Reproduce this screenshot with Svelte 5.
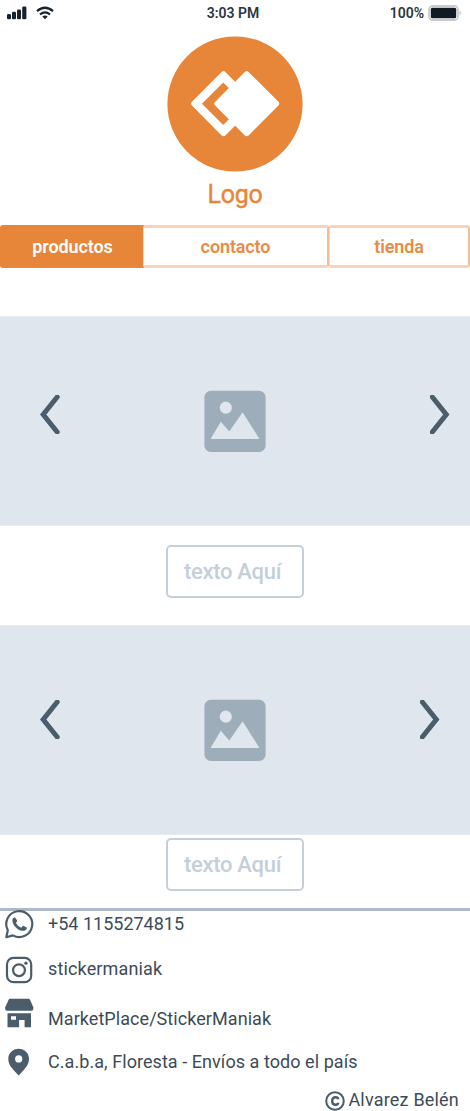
<script>
  const slides = ['first', 'second'];
</script>

<main>
  <header class="status">
    <div class="signals">
      <svg width="20" height="14" viewBox="0 0 20 14"><g fill="#17222c"><rect x="0" y="8" width="4" height="5.3" rx="1.3"/><rect x="5" y="5.8" width="4" height="7.5" rx="1.3"/><rect x="10" y="3.5" width="4" height="9.8" rx="1.3"/><rect x="15.2" y="0.5" width="4.2" height="12.8" rx="1.3"/></g></svg>
      <svg width="18" height="14" viewBox="0 0 18 14"><g fill="none" stroke="#17222c" stroke-width="2.2"><path d="M1 5.2Q9-1.7 17 5.2"/><path d="M4 8.5Q9 4.2 14 8.5"/></g><path d="M6.3 10.5Q9 8.5 11.7 10.5L9 13.3Z" fill="#17222c"/></svg>
    </div>
    <span class="time">3:03 PM</span>
    <div class="power">
      <span>100%</span>
      <svg width="34" height="16" viewBox="0 0 34 16"><rect x="1" y="1" width="29" height="14" rx="3.5" fill="#fff" stroke="#c9cccf" stroke-width="1.8"/><rect x="2.8" y="2.8" width="25.4" height="10.4" rx="1.5" fill="#101b24"/><path d="M31.5 5.5Q35 8 31.5 10.5Z" fill="#c9cccf"/></svg>
    </div>
  </header>

  <section class="brand">
    <svg width="136" height="136" viewBox="0 0 136 136">
      <circle cx="68" cy="68" r="67.6" fill="#e78539"/>
      <path d="M56.5 38.3 27.3 67.7 56.5 97.1 85.9 67.7Z" fill="#fff" stroke="#fff" stroke-width="6" stroke-linejoin="round"/>
      <path d="M59.2 49.4 40.9 67.7 59.2 86" fill="none" stroke="#e78539" stroke-width="8.4"/>
      <path d="M79.7 38.3 50.7 67.7 79.7 97.1 109.1 67.7Z" fill="#fff" stroke="#fff" stroke-width="6" stroke-linejoin="round"/>
    </svg>
    <h1>Logo</h1>
  </section>

  <nav>
    <a class="active" href="#productos"><span>productos</span></a>
    <a href="#contacto"><span>contacto</span></a>
    <a href="#tienda"><span>tienda</span></a>
  </nav>

  {#each slides as slide (slide)}
    <section class="slide {slide}">
      <div class="panel">
        <svg class="arrow prev" width="20" height="39" viewBox="0 0 20 39"><path d="M17.2 2 3.2 19.5 17.2 37"/></svg>
        <svg class="photo" width="62" height="62" viewBox="0 0 62 62"><rect x="0.4" y="0.8" width="61.2" height="61.2" rx="6.5" fill="#9eadba"/><g fill="#dfe6ee"><circle cx="21.8" cy="17.7" r="6.1"/><path d="M7 48.3 16.8 31.8 25.3 41.6 38.6 22.3 55 48.3V49.1H7Z"/></g></svg>
        <svg class="arrow next" width="20" height="39" viewBox="0 0 20 39"><path d="M2.3 2 16.3 19.5 2.3 37"/></svg>
      </div>
      <div class="caption"><span>texto Aquí</span></div>
    </section>
  {/each}

  <footer>
    <div class="row phone">
      <svg width="30" height="30" viewBox="0 0 30 30"><path d="M1.3 28.2 2.8 21.2A13 13 0 1 1 7.9 26.4Z" fill="none" stroke="#4b5d6b" stroke-width="2.2" stroke-linejoin="round"/><path d="M9.8 8.2C8.3 8.4 7.1 10 7.4 12.2 8 16.2 12.6 21.3 17.3 21.8 19.9 22 21.9 20.7 22 18.7L18.4 16.8C17.6 16.5 17 18.3 16.2 18.7 13.8 17.8 11.9 16 10.9 13.8 11.7 12.8 12.5 12.2 12.2 11.4Z" fill="#4b5d6b"/></svg>
      <span>+54 1155274815</span>
    </div>
    <div class="row social">
      <svg width="30" height="30" viewBox="0 0 30 30"><g fill="none" stroke="#4b5d6b" stroke-width="2.2"><rect x="2" y="2.8" width="24.2" height="24.4" rx="6.5"/><circle cx="14" cy="15.2" r="5.9"/></g><circle cx="20.9" cy="8.2" r="1.6" fill="#4b5d6b"/></svg>
      <span>stickermaniak</span>
    </div>
    <div class="row market">
      <svg width="30" height="30" viewBox="0 0 30 30"><g fill="#4b5d6b"><path d="M4.3.8H24.3L25.2 2.2 28.3 9.2V11Q28.3 12.8 26.5 12.8H2Q.2 12.8.2 11V9.2L3.4 2.2Z"/><path fill-rule="evenodd" d="M2.5 15.3H26V29.2H19.6V22H14.1V29.2H2.5ZM6 18.3V21.7H11V18.3Z"/></g></svg>
      <span>MarketPlace/StickerManiak</span>
    </div>
    <div class="row place">
      <svg width="30" height="30" viewBox="0 0 30 30"><path fill="#4b5d6b" fill-rule="evenodd" d="M13.7 1.8C7.8 1.8 3.3 6.2 3.3 11.8 3.3 17.3 6.3 21.1 13.7 28.5 21 21.1 24 17.3 24 11.8 24 6.2 19.5 1.8 13.7 1.8ZM13.7 8.3A3.6 3.6 0 1 1 13.7 15.5 3.6 3.6 0 1 1 13.7 8.3Z"/></svg>
      <span>C.a.b.a, Floresta - Envíos a todo el país</span>
    </div>
    <div class="credit">
      <svg width="20" height="20" viewBox="0 0 20 20"><g fill="none" stroke="#4b5d6b" stroke-width="2"><circle cx="10" cy="10" r="8.8"/><path stroke-width="2.4" d="M13.3 8.2C12.7 5.4 7.2 5.3 7.2 10S12.7 14.6 13.3 11.8"/></g></svg>
      <span>Alvarez Belén</span>
    </div>
  </footer>
</main>

<style>
  :global(body) { margin: 0; background: #fff; }
  * { box-sizing: border-box; }
  main { width: 470px; height: 1111px; overflow: hidden; font-family: Roboto, sans-serif; color: #3c4b58; background: #fff; }
  svg { display: block; flex: none; }
  .status { display: grid; grid-template-columns: 1fr auto 1fr; align-items: center; height: 26px; padding: 0 8px 0 7px; font-size: 14px; font-weight: 600; color: #2c3640; }
  .time { margin-right: 3px; }
  .signals { display: flex; gap: 9px; }
  .power { display: flex; align-items: center; justify-content: flex-end; gap: 4px; }
  .brand { display: flex; flex-direction: column; align-items: center; padding-top: 10px; height: 199px; }
  h1 { margin: 8px 0 0; font-size: 25px; line-height: 30px; font-weight: 400; color: #e78539; letter-spacing: -0.2px; -webkit-text-stroke: 0.4px #e78539; }
  nav { display: grid; grid-template-columns: 143px 186px 141px; height: 43px; }
  nav a { display: flex; align-items: center; justify-content: center; border: 3px solid #f8d3ba; border-left-width: 1px; border-right-width: 2px; border-right-color: #f5bd96; border-radius: 3px; color: #e98b45; font-size: 18px; font-weight: 600; letter-spacing: -0.12px; text-decoration: none; }
  nav a.active { width: 146px; background: #e78539; border-color: #e78539; color: #fff; }
  nav a:nth-child(2) { background: #fff; }
  .first { padding-top: 48px; }
  .second { padding-top: 27px; }
  .panel { display: grid; grid-template-columns: 1fr 62px 1fr; align-items: start; height: 210px; padding: 0 20px; background: #dfe6ee; border-top: 1px solid #e6ebf1; border-bottom: 1px solid #e6ebf1; }
  .arrow { margin-top: 78px; fill: none; stroke: #4b5d6b; stroke-width: 5; stroke-linecap: round; }
  .second .arrow { margin-top: 74px; }
  .prev { margin-left: 20px; }
  .next { justify-self: end; }
  .second .next { margin-right: 10px; }
  .photo { margin-top: 73px; }
  .caption { display: flex; align-items: center; justify-content: center; width: 138px; height: 53px; margin: 19px auto 0; padding-right: 5px; border: 2px solid #c4cfd9; border-radius: 5px; color: #c4cfd9; font-size: 22px; font-weight: 500; letter-spacing: -0.3px; }
  .second .caption { margin-top: 3px; }
  footer { margin-top: 17px; border-top: 3px solid #adb9c7; font-size: 18px; }
  .row { display: flex; height: 30px; padding-left: 5px; gap: 13px; line-height: 30px; white-space: nowrap; }
  .phone { margin-top: -2px; }
  .social { margin-top: 16px; letter-spacing: 0.15px; }
  .social span { line-height: 28px; }
  .market { margin-top: 13px; letter-spacing: 0.06px; }
  .market span { padding-top: 6px; }
  .place { margin-top: 19px; letter-spacing: 0.06px; }
  .credit { display: flex; justify-content: flex-end; align-items: center; gap: 3px; height: 24px; margin-top: 12px; padding-right: 11px; letter-spacing: 0.2px; }
  .credit span { line-height: 20px; padding-bottom: 2px; }
</style>
